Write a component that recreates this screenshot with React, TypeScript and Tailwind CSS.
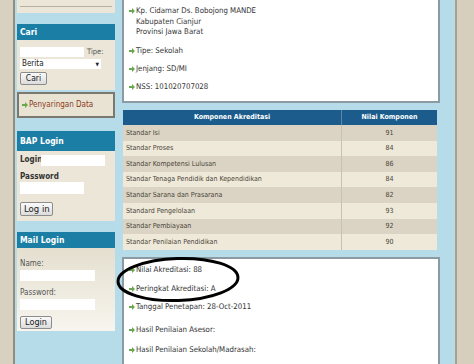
import React from 'react';

const Bullet: React.FC = () => (
  <svg width="6" height="6" viewBox="0 0 6 6" className="mr-[1px] shrink-0">
    <path d="M0 2h3V0l3 3-3 3V4H0z" fill="#6aa84f" />
  </svg>
);

const Item: React.FC<{ children: React.ReactNode; className?: string }> = ({ children, className }) => (
  <div className={`flex items-start ${className ?? ''}`}>
    <div className="h-[10.5px] flex items-center">
      <Bullet />
    </div>
    <div>{children}</div>
  </div>
);

const rows: [string, number][] = [
  ['Standar Isi', 91],
  ['Standar Proses', 84],
  ['Standar Kompetensi Lulusan', 86],
  ['Standar Tenaga Pendidik dan Kependidikan', 84],
  ['Standar Sarana dan Prasarana', 82],
  ['Standard Pengelolaan', 93],
  ['Standar Pembiayaan', 92],
  ['Standar Penilaian Pendidikan', 90],
];

const Btn: React.FC<{ label: string; className?: string }> = ({ label, className }) => (
  <button
    className={`block h-[13px] px-[3px] leading-none whitespace-nowrap text-[#222] bg-gradient-to-b from-[#fafafa] to-[#dcdcdc] border border-[#8c8c8c] rounded-[2px] ${className ?? ''}`}
  >
    {label}
  </button>
);

const Header: React.FC<{ title: string; h: string }> = ({ title, h }) => (
  <div className={`${h} bg-[#1b7ea5] text-white font-bold text-[8.5px] flex items-center pl-[3px]`}>{title}</div>
);

export default function App() {
  return (
    <div
      className="w-[474px] h-[364px] overflow-hidden flex bg-[#b7dce9] text-[#333]"
      style={{ fontFamily: '"DejaVu Sans Condensed", "Liberation Sans", sans-serif' }}
    >
      {/* left strip */}
      <div className="w-[15px] shrink-0 bg-[#d9d1c0] border-r-2 border-[#938c80]" />

      {/* sidebar */}
      <div className="w-[101px] shrink-0 pl-[2px] pr-[1px] flex flex-col">
        <div className="h-[13px] bg-[#ebe6d8] pt-[6px] px-[3px]">
          <div className="border-t border-[#b8b09e]" />
        </div>

        <div className="mt-[11px]">
          <Header title="Cari" h="h-[16px]" />
          <div className="h-[50px] bg-[#ebe6d8] pl-[3px] pt-[7px]">
            <div className="h-[10px] flex items-center">
              <div className="w-[64px] h-[10px] bg-white" />
              <span className="ml-[3px] leading-[10px] text-[7.5px] text-[#555]">Tipe:</span>
            </div>
            <div className="mt-[2px] w-[81px] h-[10px] bg-white flex items-center justify-between px-[2px] leading-[10px] text-[8px] text-[#222]">
              <span>Berita</span>
              <span className="text-[5px]">▼</span>
            </div>
            <Btn label="Cari" className="mt-[3px] w-[27px] h-[13px] text-[8.5px]" />
          </div>
        </div>

        <div className="mt-[2px] h-[26px] bg-[#e9e3d3] border-2 border-[#7d786e] flex items-center pl-[3px] text-[8px] text-[#8a3b1e]">
          <Bullet />
          <span>Penyaringan Data</span>
        </div>

        <div className="mt-[13px]">
          <Header title="BAP Login" h="h-[20px]" />
          <div className="h-[70px] bg-[#ebe6d8] pl-[3px] pt-[3px]">
            <div className="flex items-center">
              <span className="w-[21px] text-[8px] font-bold text-[#333]">Login</span>
              <div className="w-[64px] h-[11px] bg-white" />
            </div>
            <div className="mt-[6px] text-[8px] font-bold text-[#333] leading-[9px]">Password</div>
            <div className="mt-[1px] w-[64px] h-[12px] bg-white" />
            <Btn label="Log in" className="mt-[8px] w-[33px] h-[14px] text-[9.5px]" />
          </div>
        </div>

        <div className="mt-[11px]">
          <Header title="Mail Login" h="h-[16px]" />
          <div className="h-[83px] bg-gradient-to-b from-[#e4dfcf] to-[#f7f5ee] pl-[3px] pt-[12px]">
            <div className="text-[8px] text-[#555] leading-[8px]">Name:</div>
            <div className="mt-[2px] w-[75px] h-[11px] bg-white" />
            <div className="mt-[8px] text-[8px] text-[#555] leading-[8px]">Password:</div>
            <div className="mt-[2px] w-[75px] h-[11px] bg-white" />
            <Btn label="Login" className="mt-[6px] w-[32px] h-[13px] text-[9px]" />
          </div>
        </div>
      </div>

      {/* main */}
      <div className="w-[339px] shrink-0 pl-[6px] flex flex-col text-[7.8px] text-[#333]">
        <div className="w-[318px] h-[103px] bg-white border-2 border-t-0 border-[#8b9ba1] pl-[5px] pt-[6px] leading-[10.5px]">
          <Item>
            <div>Kp. Cidamar Ds. Bobojong MANDE</div>
            <div>Kabupaten Cianjur</div>
            <div>Provinsi Jawa Barat</div>
          </Item>
          <Item className="mt-[8px]">Tipe: Sekolah</Item>
          <Item className="mt-[7.5px]">Jenjang: SD/MI</Item>
          <Item className="mt-[7.5px]">NSS: 101020707028</Item>
        </div>

        <div className="mt-[7px] ml-[1px] w-[314px] text-[7px] text-[#4a4438]">
          <div className="h-[15px] bg-[#1b5c8c] text-white font-bold flex">
            <div className="w-[219px] flex items-center justify-center border-r border-[#5d87a8]">Komponen Akreditasi</div>
            <div className="flex-1 flex items-center justify-center">Nilai Komponen</div>
          </div>
          {rows.map(([name, val], i) => (
            <div key={name} className={`h-[15.6px] flex ${i % 2 === 0 ? 'bg-[#dbd4c4]' : 'bg-[#efe9da]'}`}>
              <div className="w-[219px] flex items-center pl-[3px] border-r border-[#c9c1ae]">{name}</div>
              <div className="flex-1 flex items-center justify-center">{val}</div>
            </div>
          ))}
        </div>

        <div className="relative mt-[7px] w-[318px] flex-1 bg-white border-2 border-b-0 border-[#8b9ba1] pl-[5px] pt-[6px] leading-[10.5px]">
          <Item>Nilai Akreditasi: 88</Item>
          <Item className="mt-[8.5px]">Peringkat Akreditasi: A</Item>
          <Item className="mt-[7.5px]">Tanggal Penetapan: 28-Oct-2011</Item>
          <Item className="mt-[12.5px]">Hasil Penilaian Asesor:</Item>
          <Item className="mt-[9.5px]">Hasil Penilaian Sekolah/Madrasah:</Item>

          <svg className="absolute left-[-9px] top-[-3px]" width="128" height="47" viewBox="0 0 128 47">
            <ellipse cx="63" cy="23.5" rx="60" ry="21" fill="none" stroke="#000" strokeWidth="3" transform="rotate(-2 63 23.5)" />
          </svg>
        </div>
      </div>

      {/* right strip */}
      <div className="flex-1 bg-[#d7cfbe] border-l-2 border-[#a7a08f]" />
    </div>
  );
}
